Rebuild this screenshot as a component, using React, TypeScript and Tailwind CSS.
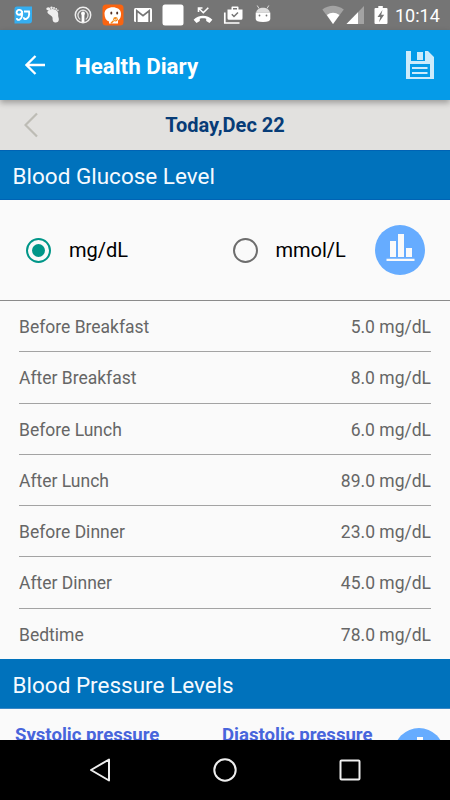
import type { ReactNode } from 'react';

const readings = [
  { label: 'Before Breakfast', value: '5.0 mg/dL' },
  { label: 'After Breakfast', value: '8.0 mg/dL' },
  { label: 'Before Lunch', value: '6.0 mg/dL' },
  { label: 'After Lunch', value: '89.0 mg/dL' },
  { label: 'Before Dinner', value: '23.0 mg/dL' },
  { label: 'After Dinner', value: '45.0 mg/dL' },
  { label: 'Bedtime', value: '78.0 mg/dL' },
];

function StatusIcon({ children }: { children: ReactNode }) {
  return (
    <svg className="h-[30px] w-[30px] shrink-0" viewBox="0 0 30 30" fill="none">
      {children}
    </svg>
  );
}

function StatusBar() {
  return (
    <div className="flex h-[30px] shrink-0 items-center bg-[#757575] pl-[7.5px]">
      <StatusIcon>
        <path d="M9 6.5H24V20.5Q24 23.5 21 23.5H6.5V9Q6.5 6.5 9 6.5Z" fill="#35aef0" />
        <path d="M14 12.5a2.7 2.5 0 1 0-5.2.8c.5 2 4 2 5-.3M14 11.5c.6 4-.2 7-2.5 8.2-1.6.6-2.7-.2-2.5-1.5M16 11.5h5c.5 3-.3 6.5-3 7.5-1.5.3-2.3-.5-2-1.8" stroke="#fff" strokeWidth="1.900" />
      </StatusIcon>
      <StatusIcon>
        <path d="M9.500 11.500c1.500-3.400 8-3.400 10 .1 1.400 2.400.2 3.900 1 5.900.8 2.200.3 4.900-2.600 5-3.200 0-3.400-2.600-3.300-4.300 0-3.200-6.100-3.700-5.100-6.700Z" fill="#eee" />
        <ellipse cx="10.300" cy="8.700" rx="2" ry="1.500" fill="#eee" />
        <circle cx="13.500" cy="7.800" r="1.200" fill="#eee" />
        <circle cx="16" cy="8" r="1" fill="#eee" />
        <circle cx="18.200" cy="8.900" r=".9" fill="#eee" />
        <circle cx="19.900" cy="10.300" r=".8" fill="#eee" />
      </StatusIcon>
      <StatusIcon>
        <circle cx="15" cy="15" r="7.700" stroke="#eee" strokeWidth="1.500" />
        <path d="M12.300 19.500A5 5 0 1 1 17.700 19.500" stroke="#ddd" strokeWidth="1.400" />
        <path d="M15 14.500V22" stroke="#fff" strokeWidth="2.800" />
        <circle cx="15" cy="13.500" r="1.900" fill="#fff" />
      </StatusIcon>
      <StatusIcon>
        <rect x="4.500" y="4.500" width="21" height="21" rx="3.500" fill="#fa6410" />
        <path d="M6.500 13.500C6.500 5 23 5 23 13.500c0 4.500-1.500 6-3 7v3H11v-2c-3-1-4.500-4-4.500-8Z" fill="#fff" />
        <ellipse cx="13.300" cy="13" rx="1" ry="1.500" fill="#553024" />
        <ellipse cx="19.200" cy="13" rx="1" ry="1.500" fill="#553024" />
        <circle cx="17.500" cy="19.300" r="2.300" fill="#f68a18" />
        <path d="m15.500 20.700-2.500 2.500" stroke="#f68a18" strokeWidth="1.500" />
        <path d="M16 19.700q2 .7 3-1" stroke="#fff" strokeWidth=".8" />
      </StatusIcon>
      <StatusIcon>
        <rect x="6" y="8" width="18" height="14" rx="1.500" fill="#fff" />
        <path d="M8.800 22V10.800l6.200 4.800 6.200-4.800V22" stroke="#757575" strokeWidth="1.700" />
      </StatusIcon>
      <StatusIcon>
        <rect x="4.500" y="4.500" width="21" height="21" rx="2.500" fill="#fff" />
      </StatusIcon>
      <StatusIcon>
        <path d="M10.500 12V8h4M11 8.500l4.300 4.200 5-5" stroke="#fff" strokeWidth="1.600" />
        <path d="M5.600 19.700c5-5.400 13.800-5.400 18.800 0l-2.900 3.300-3.300-2v-2.300c-2.100-.6-4.300-.6-6.400 0V21l-3.300 2Z" fill="#fff" />
      </StatusIcon>
      <StatusIcon>
        <path fillRule="evenodd" d="M9.500 9.500h4V7.300q0-.8.8-.8h5.400q.8 0 .8.800v2.200h4v8.700q0 1.500-1.500 1.500H11q-1.500 0-1.500-1.500ZM15 8v1.500h4V8Z" fill="#fff" />
        <path d="M6.800 12.500V23H21.500" stroke="#fff" strokeWidth="1.700" />
        <path d="m13.800 14.300 2.200 2.200 4-4" stroke="#757575" strokeWidth="1.500" />
      </StatusIcon>
      <StatusIcon>
        <path d="M9.200 5.500 11 8.500M20.800 5.500 19 8.500" stroke="#ddd" strokeWidth="1" />
        <path d="M8.200 12.600C8.500 6 21.500 6 21.800 12.600Z" fill="#ddd" />
        <path d="M7.700 12.500H22.300V19q0 3-7.300 3t-7.300-3Z" fill="#fff" />
        <circle cx="11.500" cy="15.500" r=".9" fill="#757575" />
        <circle cx="18.500" cy="15.500" r=".9" fill="#757575" />
      </StatusIcon>
      <svg className="ml-[44.5px] h-[30px] w-[68px] shrink-0" viewBox="0 0 68 30" fill="none">
        <path d="M.3 9.500Q11 2 21.800 9.500L11 24Z" fill="#a3a3a3" />
        <path d="M4.800 15Q11 10.300 17.500 15L11 24Z" fill="#fff" />
        <path d="M42 6V24H24.500Z" fill="#a3a3a3" />
        <path d="M36 12.200V24H24.500Z" fill="#fff" />
        <path d="M56.300 6h4.500v2h3.700q1 0 1 1v14q0 1-1 1H53.500q-1 0-1-1V9q0-1 1-1h2.800Z" fill="#fff" />
        <path d="m60.500 10-5 7h2.800L57 22.300l5.200-7.500h-3Z" fill="#757575" />
      </svg>
      <span className="ml-[5px] pt-px text-[18px] leading-[29px] text-white">10:14</span>
    </div>
  );
}

function ChartButton() {
  return (
    <button aria-label="Chart" className="h-[50px] w-[50px] shrink-0 rounded-full bg-[#66acff]">
      <svg className="h-[50px] w-[50px]" viewBox="0 0 50 50" fill="#fafafa">
        <path d="M15 16h6v16h-6ZM23 9h6v23h-6ZM31 23h6v9h-6ZM11.500 33.700h28V36h-28Z" />
      </svg>
    </button>
  );
}

function SectionHeader({ title, edge }: { title: string; edge: string }) {
  return (
    <h2
      className={`h-[50px] shrink-0 border-y bg-[#0072bc] pl-[12.5px] text-[22.5px] leading-[50px] text-[#f5faff] ${edge}`}
    >
      {title}
    </h2>
  );
}

export default function App() {
  return (
    <div className="flex h-[800px] w-[450px] flex-col overflow-hidden bg-[#fafafa] font-[Roboto,sans-serif]">
      <StatusBar />

      <header className="relative z-10 flex h-[70px] shrink-0 items-center bg-[#059be8] shadow-[0_3px_6px_rgba(0,0,0,0.3)]">
        <svg className="ml-[25px] h-5 w-5" viewBox="0 0 20 20" fill="none" stroke="#fff" strokeWidth="2.300">
          <path d="M20 10H2M10.500 1 1.500 10l9 9" />
        </svg>
        <h1 className="ml-[30px] pt-[4px] text-[22.3px] font-bold text-white">Health Diary</h1>
        <svg className="mr-[16px] ml-auto h-7 w-7" viewBox="0 0 28 28">
          <path fill="#cdebfb" fillRule="evenodd" d="M0 0H5V10H19V0H22L28 6V28H0ZM4 13V26H24V13Z" />
          <path fill="#cdebfb" d="M11 1h6v8h-6ZM6 16h15.500v2H6ZM6 21h15.500v2H6Z" />
        </svg>
      </header>

      <div className="grid h-[50px] shrink-0 grid-cols-[60px_1fr_60px] items-center bg-[#e2e1df]">
        <svg className="ml-6 h-[26px] w-[14px]" viewBox="0 0 14 26" fill="none" stroke="#bdbcb5" strokeWidth="2.200">
          <path d="M13 1.500 1.500 13 13 24.500" />
        </svg>
        <span className="text-center text-[20px] font-bold text-[#073c77]">Today,Dec 22</span>
      </div>

      <SectionHeader title="Blood Glucose Level" edge="border-[#0063b4]" />

      <div className="flex h-[101px] shrink-0 items-center border-b border-[#8b8b8b] text-[20px] text-black">
        <span className="ml-[26px] flex h-[25px] w-[25px] items-center justify-center rounded-full border-2 border-[#009688]">
          <span className="h-[13px] w-[13px] rounded-full bg-[#009688]" />
        </span>
        <span className="ml-[18px] w-[146px]">mg/dL</span>
        <span className="ml-[18px] h-[25px] w-[25px] rounded-full border-2 border-[#6d6d6d]" />
        <span className="ml-[17.5px] w-[99.5px]">mmol/L</span>
        <ChartButton />
      </div>

      <ul className="flex h-[358px] shrink-0 flex-col px-[19px] text-[17.5px] text-[#666]">
        {readings.map((r) => (
          <li
            key={r.label}
            className="flex h-[51.25px] shrink-0 items-center justify-between border-b border-[#a3a3a3] pt-[2px] last:border-transparent"
          >
            <span>{r.label}</span>
            <span>{r.value}</span>
          </li>
        ))}
      </ul>

      <SectionHeader title="Blood Pressure Levels" edge="border-t-[#0072bc] border-b-[#3b88c6]" />

      <div className="flex h-[31px] shrink-0 items-start overflow-hidden text-[18.6px] leading-[22px] font-bold text-[#4865dc]">
        <span className="mt-[15px] ml-[15px] w-[207px]">Systolic pressure</span>
        <span className="mt-[15px] w-[172px]">Diastolic pressure</span>
        <div className="mt-[19px]">
          <ChartButton />
        </div>
      </div>

      <nav className="flex h-[60px] shrink-0 items-center justify-center gap-[95px] bg-black">
        <svg className="h-[30px] w-[30px]" viewBox="0 0 30 30" fill="none" stroke="#eee" strokeWidth="2">
          <path strokeLinejoin="round" d="M24 4.500V25.500L6 15Z" />
        </svg>
        <svg className="h-[30px] w-[30px]" viewBox="0 0 30 30" fill="none" stroke="#eee" strokeWidth="2">
          <circle cx="15" cy="15" r="10.700" />
        </svg>
        <svg className="h-[30px] w-[30px]" viewBox="0 0 30 30" fill="none" stroke="#eee" strokeWidth="2">
          <rect x="5.500" y="5.500" width="19" height="19" rx="1" />
        </svg>
      </nav>
    </div>
  );
}
